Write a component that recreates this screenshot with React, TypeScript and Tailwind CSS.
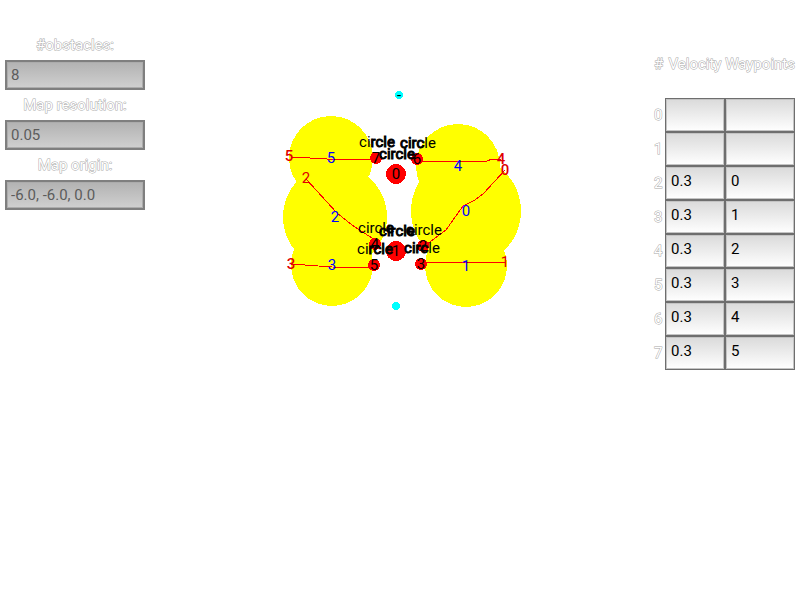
import React from "react";

const fields = [
  { id: "obstacles", label: "#obstacles:", value: "8" },
  { id: "resolution", label: "Map resolution:", value: "0.05" },
  { id: "origin", label: "Map origin:", value: "-6.0, -6.0, 0.0" },
];

const rows = [
  ["", ""],
  ["", ""],
  ["0.3", "0"],
  ["0.3", "1"],
  ["0.3", "2"],
  ["0.3", "3"],
  ["0.3", "4"],
  ["0.3", "5"],
];

const ghost =
  "font-normal text-white [-webkit-text-stroke:1px_#a8a8a8] [paint-order:stroke_fill]";

const cell =
  "block h-[34px] w-full rounded-none border border-[#6e6e6e] bg-linear-to-b from-[#dadada] to-white pr-1 pb-1 pl-[5px] text-black shadow-[inset_0_0_0_1px_#c4c4c4] outline-none";

const zones = [
  { x: 331, y: 158, r: 42 },
  { x: 458, y: 166, r: 42 },
  { x: 335, y: 217, r: 52 },
  { x: 466, y: 211, r: 55 },
  { x: 332, y: 265, r: 41 },
  { x: 466, y: 266, r: 41 },
];

const obstacles = [
  { n: "0", x: 396, y: 174, r: 10 },
  { n: "1", x: 396, y: 251, r: 10 },
  { n: "2", x: 423, y: 246, r: 6 },
  { n: "3", x: 421, y: 264, r: 6 },
  { n: "4", x: 375, y: 244, r: 6 },
  { n: "5", x: 374, y: 265, r: 6 },
  { n: "6", x: 417, y: 159, r: 6 },
  { n: "7", x: 376, y: 158, r: 6 },
];

const paths = [
  "292,157 327,159 376,159",
  "417,161 487,161 492,159 501,159",
  "505,170 484,193 475,200 463,206 446,230 423,247",
  "306,179 337,213 352,225 375,240",
  "291,264 332,267 374,268",
  "421,264 432,262 505,262",
];

// Letters from index `from` up to `to` lie on the bare background and are drawn heavy.
const captions = [
  { x: 377, y: 147, from: 2, to: 6 },
  { x: 418, y: 148, from: 0, to: 4 },
  { x: 397, y: 159, from: 0, to: 6 },
  { x: 376, y: 233, from: 5, to: 6 },
  { x: 397, y: 236, from: 0, to: 6 },
  { x: 424, y: 235, from: 0, to: 1 },
  { x: 375, y: 254, from: 2, to: 6 },
  { x: 422, y: 253, from: 0, to: 4 },
];

const goals = [
  { n: "5", x: 331, y: 163 },
  { n: "4", x: 458, y: 171 },
  { n: "2", x: 335, y: 222 },
  { n: "0", x: 466, y: 216 },
  { n: "3", x: 332, y: 270 },
  { n: "1", x: 466, y: 271 },
];

const starts = [
  { n: "5", x: 289, y: 161, heavy: true },
  { n: "4", x: 501, y: 164, heavy: true },
  { n: "0", x: 505, y: 175, heavy: true },
  { n: "2", x: 306, y: 183, heavy: false },
  { n: "3", x: 291, y: 269, heavy: true },
  { n: "1", x: 505, y: 267, heavy: false },
];

function Caption({ x, y, from, to }: { x: number; y: number; from: number; to: number }) {
  const word = "circle";
  return (
    <text x={x} y={y}>
      {word.slice(0, from)}
      <tspan stroke="#000" strokeWidth="1">{word.slice(from, to)}</tspan>
      {word.slice(to)}
    </text>
  );
}

function MapView() {
  return (
    <svg
      viewBox="270 80 260 240"
      className="mt-20 h-[240px] w-[260px] shrink-0 text-[15px]"
      textAnchor="middle"
      role="img"
      aria-label="Map"
    >
      <g fill="#ff0" shapeRendering="crispEdges">
        {zones.map((z, i) => (
          <circle key={i} cx={z.x} cy={z.y} r={z.r} />
        ))}
      </g>
      <g fill="#0ff" shapeRendering="crispEdges">
        <circle cx="399" cy="95" r="4" />
        <circle cx="396" cy="306" r="4" />
      </g>
      <text x="399" y="100">-</text>
      <g fill="#f00" shapeRendering="crispEdges">
        {obstacles.map((o) => (
          <circle key={o.n} cx={o.x} cy={o.y} r={o.r} />
        ))}
      </g>
      <g fill="none" stroke="#f00" strokeWidth="1" shapeRendering="crispEdges">
        {paths.map((p) => (
          <polyline key={p} points={p} />
        ))}
      </g>
      {captions.map((c, i) => (
        <Caption key={i} {...c} />
      ))}
      {obstacles.map((o) => (
        <text key={o.n} x={o.x} y={o.y + 5}>{o.n}</text>
      ))}
      <g fill="#00f">
        {goals.map((g) => (
          <text key={g.n} x={g.x} y={g.y}>{g.n}</text>
        ))}
      </g>
      <g fill="#e00000">
        {starts.map((s) => (
          <text key={s.n} x={s.x} y={s.y} className={s.heavy ? "font-medium" : "font-normal"}>
            {s.n}
          </text>
        ))}
      </g>
    </svg>
  );
}

export default function App() {
  return (
    <div className="flex min-h-screen items-start justify-between bg-white font-[Roboto,sans-serif] text-[15px] leading-5">
      <form className="w-[150px] shrink-0 px-[5px] pt-[30px]">
        {fields.map((f) => (
          <div key={f.id}>
            <label htmlFor={f.id} className={`block h-[30px] text-center leading-[30px] ${ghost}`}>
              {f.label}
            </label>
            <input
              id={f.id}
              defaultValue={f.value}
              readOnly
              className="block h-[30px] w-full rounded-none border-2 border-[#7f7f7f] bg-linear-to-b from-[#b2b2b2] to-[#d0d0d0] px-1 text-[#5c5c5c] shadow-[inset_0_0_0_1px_#acacac] outline-none"
            />
          </div>
        ))}
      </form>
      <main className="flex flex-1 justify-center">
        <MapView />
      </main>
      <table className="mt-[47px] mr-[5px] w-[145px] shrink-0 table-fixed border-collapse">
        <colgroup>
          <col className="w-[15px]" />
          <col className="w-[60px]" />
          <col className="w-[70px]" />
        </colgroup>
        <thead>
          <tr className="h-[51px] align-top">
            <th scope="col" className={`p-0 pl-1 text-left leading-[34px] ${ghost}`}>#</th>
            <th scope="col" className={`p-0 text-center leading-[34px] ${ghost}`}>Velocity</th>
            <th scope="col" className={`p-0 text-right leading-[34px] ${ghost}`}>Waypoints</th>
          </tr>
        </thead>
        <tbody>
          {rows.map(([v, w], i) => (
            <tr key={i}>
              <th scope="row" className={`p-0 pl-1 text-left ${ghost}`}>{i}</th>
              <td className="p-0">
                <input aria-label={`Velocity ${i}`} defaultValue={v} className={cell} />
              </td>
              <td className="p-0">
                <input aria-label={`Waypoint ${i}`} defaultValue={w} className={cell} />
              </td>
            </tr>
          ))}
        </tbody>
      </table>
    </div>
  );
}
